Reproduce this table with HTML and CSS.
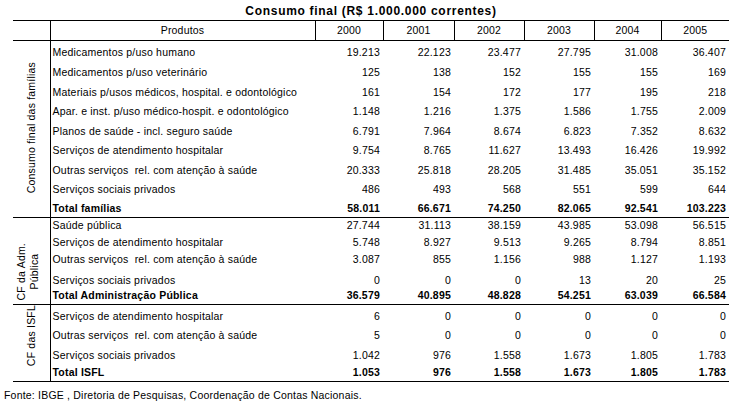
FILE: index.html
```html
<!DOCTYPE html>
<html lang="pt-BR">
<head>
<meta charset="utf-8">
<title>Consumo final</title>
<link rel="stylesheet" href="styles.css">
</head>
<body>
<div class="page">
  <div class="sheet">
    <h1 class="title">Consumo final (R$ 1.000.000 correntes)</h1>
    <table class="data">
      <colgroup>
        <col class="c-grp"><col class="c-prod"><col class="c-y68"><col class="c-y71"><col class="c-y70"><col class="c-y70"><col class="c-y67"><col class="c-y68">
      </colgroup>
      <thead>
        <tr>
          <th class="grp"></th><th class="prod-h">Produtos</th><th class="yr">2000</th><th class="yr">2001</th><th class="yr">2002</th><th class="yr">2003</th><th class="yr">2004</th><th class="yr">2005</th>
        </tr>
      </thead>
      <tbody class="sec">
        <tr class="h20"><td class="grp" rowspan="9"><span class="vlabel">Consumo final das famílias</span></td><td class="prod">Medicamentos p/uso humano</td><td class="num">19.213</td><td class="num">22.123</td><td class="num">23.477</td><td class="num">27.795</td><td class="num">31.008</td><td class="num">36.407</td></tr>
        <tr class="h20"><td class="prod">Medicamentos p/uso veterinário</td><td class="num">125</td><td class="num">138</td><td class="num">152</td><td class="num">155</td><td class="num">155</td><td class="num">169</td></tr>
        <tr class="h20"><td class="prod">Materiais p/usos médicos, hospital. e odontológico</td><td class="num">161</td><td class="num">154</td><td class="num">172</td><td class="num">177</td><td class="num">195</td><td class="num">218</td></tr>
        <tr class="h19"><td class="prod">Apar. e inst. p/uso médico-hospit. e odontológico</td><td class="num">1.148</td><td class="num">1.216</td><td class="num">1.375</td><td class="num">1.586</td><td class="num">1.755</td><td class="num">2.009</td></tr>
        <tr class="h20"><td class="prod">Planos de saúde - incl. seguro saúde</td><td class="num">6.791</td><td class="num">7.964</td><td class="num">8.674</td><td class="num">6.823</td><td class="num">7.352</td><td class="num">8.632</td></tr>
        <tr class="h19"><td class="prod">Serviços de atendimento hospitalar</td><td class="num">9.754</td><td class="num">8.765</td><td class="num">11.627</td><td class="num">13.493</td><td class="num">16.426</td><td class="num">19.992</td></tr>
        <tr class="h20"><td class="prod">Outras serviços&nbsp; rel. com atenção à saúde</td><td class="num">20.333</td><td class="num">25.818</td><td class="num">28.205</td><td class="num">31.485</td><td class="num">35.051</td><td class="num">35.152</td></tr>
        <tr class="h19"><td class="prod">Serviços sociais privados</td><td class="num">486</td><td class="num">493</td><td class="num">568</td><td class="num">551</td><td class="num">599</td><td class="num">644</td></tr>
        <tr class="h20 total"><td class="prod">Total famílias</td><td class="num">58.011</td><td class="num">66.671</td><td class="num">74.250</td><td class="num">82.065</td><td class="num">92.541</td><td class="num">103.223</td></tr>
      </tbody>
      <tbody class="sec">
        <tr class="h16"><td class="grp grp-adm" rowspan="5"><span class="vlabel">CF da Adm.<br>Pública</span></td><td class="prod">Saúde pública</td><td class="num">27.744</td><td class="num">31.113</td><td class="num">38.159</td><td class="num">43.985</td><td class="num">53.098</td><td class="num">56.515</td></tr>
        <tr class="h17"><td class="prod">Serviços de atendimento hospitalar</td><td class="num">5.748</td><td class="num">8.927</td><td class="num">9.513</td><td class="num">9.265</td><td class="num">8.794</td><td class="num">8.851</td></tr>
        <tr class="h17"><td class="prod">Outras serviços&nbsp; rel. com atenção à saúde</td><td class="num">3.087</td><td class="num">855</td><td class="num">1.156</td><td class="num">988</td><td class="num">1.127</td><td class="num">1.193</td></tr>
        <tr class="h21"><td class="prod">Serviços sociais privados</td><td class="num">0</td><td class="num">0</td><td class="num">0</td><td class="num">13</td><td class="num">20</td><td class="num">25</td></tr>
        <tr class="h16 total"><td class="prod">Total Administração Pública</td><td class="num">36.579</td><td class="num">40.895</td><td class="num">48.828</td><td class="num">54.251</td><td class="num">63.039</td><td class="num">66.584</td></tr>
      </tbody>
      <tbody class="sec">
        <tr class="h20"><td class="grp grp-isfl" rowspan="4"><span class="vlabel">CF das ISFL</span></td><td class="prod">Serviços de atendimento hospitalar</td><td class="num">6</td><td class="num">0</td><td class="num">0</td><td class="num">0</td><td class="num">0</td><td class="num">0</td></tr>
        <tr class="h19"><td class="prod">Outras serviços&nbsp; rel. com atenção à saúde</td><td class="num">5</td><td class="num">0</td><td class="num">0</td><td class="num">0</td><td class="num">0</td><td class="num">0</td></tr>
        <tr class="h20"><td class="prod">Serviços sociais privados</td><td class="num">1.042</td><td class="num">976</td><td class="num">1.558</td><td class="num">1.673</td><td class="num">1.805</td><td class="num">1.783</td></tr>
        <tr class="h18 total"><td class="prod">Total ISFL</td><td class="num">1.053</td><td class="num">976</td><td class="num">1.558</td><td class="num">1.673</td><td class="num">1.805</td><td class="num">1.783</td></tr>
      </tbody>
    </table>
  </div>
  <p class="source">Fonte: IBGE , Diretoria de Pesquisas, Coordenação de Contas Nacionais.</p>
</div>
</body>
</html>
```

FILE: styles.css
```css
* { box-sizing: border-box; }
html, body {
  margin: 0;
  padding: 0;
  background: #ffffff;
}
body {
  font-family: "Liberation Sans", Arial, sans-serif;
  font-size: 10.5px;
  letter-spacing: 0.2px;
  color: #000000;
}
.page {
  display: flex;
  flex-direction: column;
  width: 748px;
  padding-left: 4px;
}
.sheet {
  display: flex;
  flex-direction: column;
  width: 716px;
  margin-left: 9px;
}
.title {
  margin: 0;
  height: 20px;
  line-height: 22px;
  font-size: 12px;
  font-weight: bold;
  letter-spacing: 0.7px;
  text-align: center;
}
.data {
  border-collapse: collapse;
  table-layout: fixed;
  width: 716px;
  border-top: 1px solid #000;
  border-bottom: 1px solid #000;
}
.c-grp { width: 37px; }
.c-prod { width: 265px; }
.c-y68 { width: 68px; }
.c-y71 { width: 71px; }
.c-y70 { width: 70px; }
.c-y67 { width: 67px; }
.data thead tr { border-bottom: 1px solid #000; }
.data th {
  font-weight: normal;
  height: 20px;
  padding: 0;
  line-height: 13px;
  text-align: center;
  vertical-align: middle;
}
.data th.prod-h, .data th.yr { border-left: 1px solid #000; }
.data tbody.sec { border-bottom: 1px solid #000; }
.data td {
  padding: 0 3px 2px 2px;
  line-height: 13px;
  vertical-align: bottom;
  white-space: nowrap;
  overflow: hidden;
}
.data td.prod { border-left: 1px solid #000; text-align: left; padding-left: 2px; }
.data td.num { text-align: right; padding-right: 3px; }
.data td.grp {
  padding: 0;
  text-align: center;
  vertical-align: middle;
}
.data td.grp-adm { padding-top: 24px; padding-right: 6px; }
.data td.grp-isfl { padding-bottom: 12px; }
.vlabel {
  display: inline-block;
  writing-mode: vertical-rl;
  transform: rotate(180deg);
  line-height: 13px;
  text-align: center;
  white-space: nowrap;
}
.total td { font-weight: bold; }
.h16 td { height: 16px; }
.h17 td { height: 17px; }
.h18 td { height: 18px; }
.h19 td { height: 19px; }
.h20 td { height: 20px; }
.h21 td { height: 21px; }
.data td.grp { height: auto; }
.source {
  margin: 7px 0 0 0;
  line-height: 13px;
  font-size: 10.5px;
}
```
